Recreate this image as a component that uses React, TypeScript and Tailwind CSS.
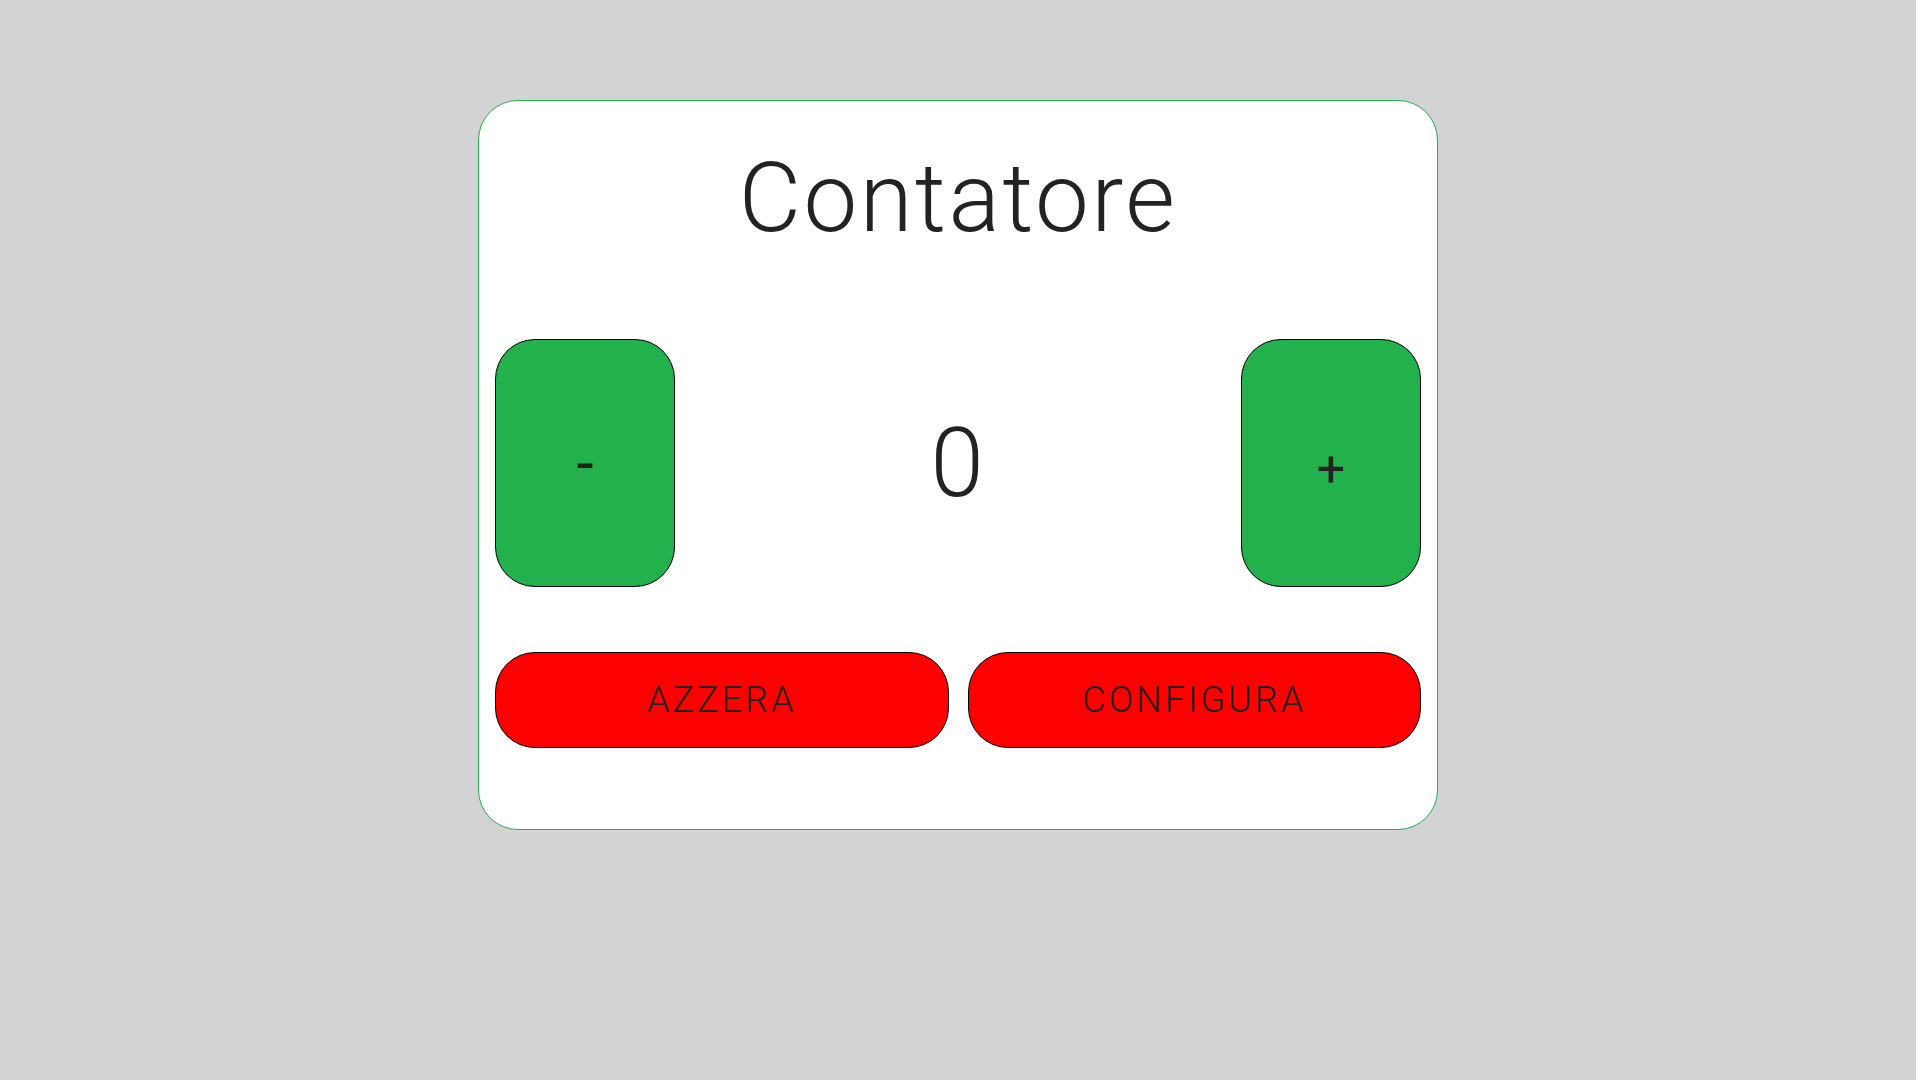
import { useState } from "react";

export default function App() {
  const [count, setCount] = useState(0);

  return (
    <div className="min-h-screen bg-[#d3d3d3] flex justify-center pt-[100px] font-['Roboto','Liberation_Sans',sans-serif] text-[#222222]">
      <div className="w-[960px] h-[730px] bg-white border border-[#22b14c] rounded-[40px] p-4 flex flex-col">
        {/* Title */}
        <h1 className="mt-[33px] text-center text-[96px] leading-none font-light tracking-[2.5px]">Contatore</h1>

        {/* Counter row */}
        <div className="mt-[93px] flex items-center justify-between">
          <button
            onClick={() => setCount(count - 1)}
            className="w-[180px] h-[248px] bg-[#22b14c] border border-black rounded-[40px] flex items-center justify-center text-[62px] font-normal leading-none"
          >
            -
          </button>
          <span className="text-[96px] font-light leading-none tracking-[2px]">{count}</span>
          <button
            onClick={() => setCount(count + 1)}
            className="w-[180px] h-[248px] bg-[#22b14c] border border-black rounded-[40px] flex items-center justify-center text-[50px] font-normal leading-none pt-[12px]"
          >
            +
          </button>
        </div>

        {/* Actions */}
        <div className="mt-[65px] grid grid-cols-2 gap-[19px]">
          <button
            onClick={() => setCount(0)}
            className="h-[96px] bg-[#ff0000] border border-black rounded-[40px] text-[36px] font-light tracking-[3px]"
          >
            AZZERA
          </button>
          <button className="h-[96px] bg-[#ff0000] border border-black rounded-[40px] text-[36px] font-light tracking-[3px]">
            CONFIGURA
          </button>
        </div>
      </div>
    </div>
  );
}
